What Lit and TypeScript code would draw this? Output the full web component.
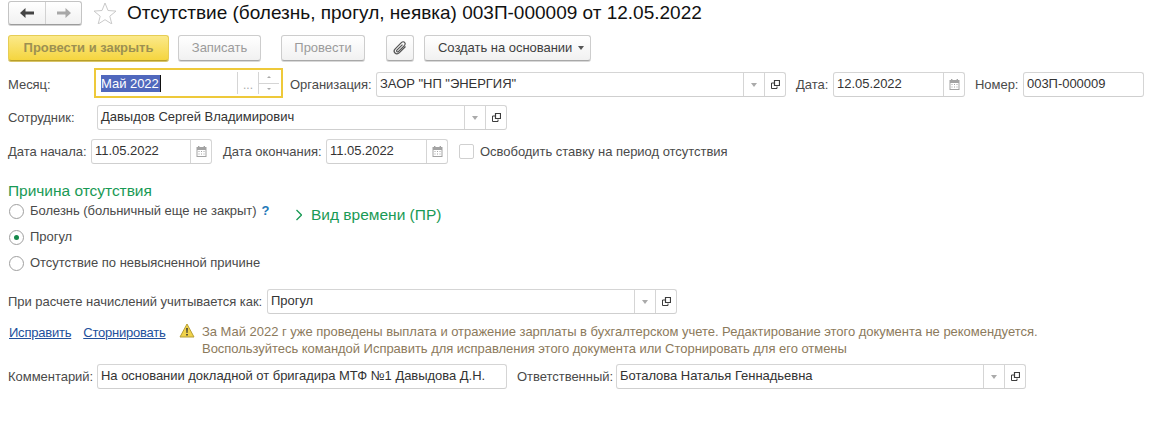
import { LitElement, html, css } from "lit";
import { customElement } from "lit/decorators.js";

const cal = html`<svg class="ico" width="13" height="13" viewBox="0 0 13 13"><path fill="#a3a3a3" d="M1.500 2h10v10h-10z"/><path fill="#fff" d="M2.500 5h8v6h-8z"/><path fill="#a3a3a3" d="M3 1h1.400v2H3zM8.600 1H10v2H8.600zM3.500 6h1v1h-1zM6 6h1v1H6zM8.500 6h1v1h-1zM3.500 8.500h1v1h-1zM6 8.500h1v1H6zM8.500 8.500h1v1h-1z"/></svg>`;
const open = html`<svg class="ico" width="9" height="9" viewBox="0 0 9 9" fill="none" stroke="#3c3c3c" stroke-width="1"><path d="M3.500 .5h5v5h-5z" stroke-width="1.200"/><path d="M3 3H.5v5.500h5.500V6.500"/></svg>`;
const caret = html`<span class="caret"></span>`;

@customElement("app-root")
export class AppRoot extends LitElement {
  static styles = css`
    :host { display: block; width: 1153px; height: 421px; background: #fff; overflow: hidden;
      font: 13px/16px "Liberation Sans", Arial, sans-serif; color: #4a4a4a; letter-spacing: -.03px; }
    * { box-sizing: border-box; }
    .head { display: flex; align-items: center; height: 24px; margin: 1px 0 0 8px; }
    .nav { display: flex; width: 74px; height: 24px; border: 1px solid #c4c4c4; border-bottom-color: #9c9c9c; border-radius: 3px;
      background: linear-gradient(#fff, #f1f1f1); box-shadow: 0 1px 0 #d0d0d0; }
    .nav > div { display: flex; align-items: center; justify-content: center; }
    .nav > div:first-child { width: 37px; border-right: 1px solid #d2d2d2; }
    .nav > div:last-child { flex: 1; }
    .star { margin-left: 11px; }
    h1 { margin: 0 0 0 10px; font: 400 19px/24px "Liberation Sans", Arial, sans-serif; color: #111; letter-spacing: 0; white-space: nowrap; }
    .bar { display: flex; margin: 10px 0 0 8px; height: 26px; }
    .btn { display: flex; align-items: center; justify-content: center; height: 26px; border: 1px solid #cdcdcd; border-bottom-color: #a8a8a8;
      border-radius: 3px; background: linear-gradient(#fff, #f1f1f1); color: #9b9b9b; box-shadow: 0 1px 0 #d8d8d8; }
    .primary { width: 161px; background: linear-gradient(#fbe98a, #f5d53f); border-color: #e6cd55 #e6cd55 #b89f2a; color: #9c9052; font-weight: 700; box-shadow: 0 1px 0 #d8c468; }
    .b-save { width: 83px; margin-left: 9px; }
    .b-post { width: 84px; margin-left: 20px; }
    .b-clip { width: 28px; margin-left: 21px; color: #444; }
    .b-base { width: 167px; margin-left: 10px; color: #3e3e3e; justify-content: flex-start; padding-left: 13px; }
    .b-base .caret { margin-left: 6px; border-top-color: #555; }
    .row { display: flex; align-items: center; height: 25px; padding-left: 8px; white-space: nowrap; }
    .r1 { margin-top: 11px; } .r2 { margin-top: 8px; } .r3 { margin-top: 9px; }
    .lbl { flex: none; }
    .f { display: flex; flex: none; height: 25px; border: 1px solid #d5d5d5; border-bottom-color: #cfcfcf; border-radius: 3px; color: #333; background: #fff; }
    .f .t { flex: 1; padding-left: 3px; line-height: 22px; overflow: hidden; }
    .f .c { display: flex; flex: none; width: 21px; align-items: center; justify-content: center; border-left: 1px solid #d5d5d5; }
    .caret { display: block; width: 0; height: 0; border: 3px solid transparent; border-top: 4px solid #aaa; border-bottom: 0; }
    .ico { display: block; }
    .focus { align-self: flex-start; width: 189px; height: 30px; margin-top: -4px; border: 2px solid #eec93a; border-radius: 0; }
    .focus .t { padding-left: 5px; display: flex; align-items: center; }
    .sel { background: #5068bd; color: #fff; height: 17px; line-height: 17px; padding-right: 1px; border-right: 1px solid #111; }
    .focus .c { margin: 2px 0; }
    .focus .dots { color: #aaa; font-size: 12px; line-height: 12px; align-items: flex-end; padding-bottom: 3px; }
    .focus .spin { width: 23px; flex-direction: column; justify-content: flex-start; padding-right: 2px; }
    .spin b { display: flex; flex: 1; width: 100%; align-items: center; justify-content: center; }
    .spin b:first-child { border-bottom: 1px solid #d5d5d5; }
    .spin i { display: block; border: 2px solid transparent; }
    .spin b:first-child i { border-bottom: 2px solid #aaa; border-top: 0; }
    .spin b:last-child i { border-top: 2px solid #aaa; border-bottom: 0; }
    .w86 { width: 86px; } .w89 { width: 89px; }
    .l-org { width: 86px; margin-left: 7px; }
    .f-org { width: 410px; } .f-410 { width: 410px; }
    .l-date { width: 37px; margin-left: 10px; }
    .f-date { width: 132px; }
    .l-num { width: 48px; margin-left: 10px; }
    .f-num { width: 121px; }
    .f-d1 { width: 121px; }
    .w83 { width: 83px; }
    .l-end { width: 103px; margin-left: 11px; }
    .f-d2 { width: 122px; }
    .chk { width: 15px; height: 15px; margin: 0 6px 0 11px; border: 1px solid #d0d0d0; border-radius: 2px; }
    .sect { margin: 19px 0 0 8px; font-size: 15.500px; line-height: 16px; color: #199a55; }
    .reason { display: flex; margin: -1px 0 0 9px; }
    .radios { width: 287px; }
    .radio { display: flex; align-items: center; height: 26px; }
    .dot { flex: none; width: 15px; height: 15px; border: 1px solid #9f9f9f; border-radius: 50%; margin-right: 6px; display: flex; align-items: center; justify-content: center; }
    .dot.on::after { content: ""; width: 5px; height: 5px; border-radius: 50%; background: #15894b; }
    .q { margin-left: 5px; color: #2378b8; font-weight: 700; }
    .kind { display: flex; align-items: center; height: 26px; margin-top: 4px; font-size: 15.500px; letter-spacing: 0; color: #199a55; }
    .kind svg { margin-right: 9px; }
    .calc { margin-top: 13px; }
    .l-calc { width: 259px; }
    .msgrow { display: flex; margin: 9px 0 0 9px; }
    .links { display: flex; width: 170px; height: 18px; align-items: center; margin-top: 1px; }
    a { color: #22509c; text-decoration: underline; letter-spacing: -.22px; }
    a + a { margin-left: 12px; }
    .warn { flex: none; margin: 0 7px 0 0; }
    .msg { color: #8c7a5c; line-height: 17px; white-space: nowrap; }
    .cmt { margin-top: 7px; }
    .l-cmt { width: 89px; }
    .l-resp { width: 99px; margin-left: 10px; }
  `;

  field(cls: string, text: string, kind: "ref" | "date" | "plain") {
    return html`<div class="f ${cls}"><div class="t">${text}</div>
      ${kind === "ref" ? html`<div class="c">${caret}</div><div class="c">${open}</div>` : ""}
      ${kind === "date" ? html`<div class="c">${cal}</div>` : ""}</div>`;
  }

  radio(on: boolean, text: string, extra: unknown = "") {
    return html`<div class="radio"><span class="dot ${on ? "on" : ""}"></span>${text}${extra}</div>`;
  }

  render() {
    return html`
      <div class="head">
        <div class="nav">
          <div><svg width="16" height="12" viewBox="0 0 16 12"><path fill="#444" d="M1 6l5.500-5v3.500H15v3H6.500V11z"/></svg></div>
          <div><svg width="16" height="12" viewBox="0 0 16 12"><path fill="#a8a8a8" d="M15 6L9.500 1v3.500H1v3h8.500V11z"/></svg></div>
        </div>
        <svg class="star" width="24" height="22" viewBox="0 0 24 22"><path fill="#fff" stroke="#c9c9c9" d="M12 1l3 7.500 8 .6-6.200 5.100 2 7.800L12 17.700 5.200 22l2-7.800L1 9.100l8-.6z"/></svg>
        <h1>Отсутствие (болезнь, прогул, неявка) 003П-000009 от 12.05.2022</h1>
      </div>
      <div class="bar">
        <div class="btn primary">Провести и закрыть</div>
        <div class="btn b-save">Записать</div>
        <div class="btn b-post">Провести</div>
        <div class="btn b-clip"><svg width="16" height="16" viewBox="0 0 16 16" fill="none" stroke="#555" stroke-width="1.200"><path d="M13.500 6.500l-6.300 6.300c-1.300 1.300-3.100 1.300-4.200.2s-1.100-2.900.2-4.200L9.600 2.400c.9-.9 2.200-.9 3 0s.8 2 0 2.900L6.300 11.600c-.4.400-1 .4-1.400 0s-.4-1 0-1.400L10.500 4.600"/></svg></div>
        <div class="btn b-base">Создать на основании${caret}</div>
      </div>
      <div class="row r1">
        <div class="lbl w86">Месяц:</div>
        <div class="f focus"><div class="t"><span class="sel">Май 2022</span></div><div class="c dots">...</div><div class="c spin"><b><i></i></b><b><i></i></b></div></div>
        <div class="lbl l-org">Организация:</div>
        ${this.field("f-org", 'ЗАОР "НП "ЭНЕРГИЯ"', "ref")}
        <div class="lbl l-date">Дата:</div>
        ${this.field("f-date", "12.05.2022", "date")}
        <div class="lbl l-num">Номер:</div>
        ${this.field("f-num", "003П-000009", "plain")}
      </div>
      <div class="row r2">
        <div class="lbl w89">Сотрудник:</div>
        ${this.field("f-410", "Давыдов Сергей Владимирович", "ref")}
      </div>
      <div class="row r3">
        <div class="lbl w83">Дата начала:</div>
        ${this.field("f-d1", "11.05.2022", "date")}
        <div class="lbl l-end">Дата окончания:</div>
        ${this.field("f-d2", "11.05.2022", "date")}
        <div class="chk"></div>
        <div>Освободить ставку на период отсутствия</div>
      </div>
      <div class="sect">Причина отсутствия</div>
      <div class="reason">
        <div class="radios">
          ${this.radio(false, "Болезнь (больничный еще не закрыт)", html`<span class="q">?</span>`)}
          ${this.radio(true, "Прогул")}
          ${this.radio(false, "Отсутствие по невыясненной причине")}
        </div>
        <div class="kind"><svg width="6" height="12" viewBox="0 0 6 12" fill="none" stroke="#199a55" stroke-width="1.300"><path d="M.5 1l5 5-5 5"/></svg>Вид времени (ПР)</div>
      </div>
      <div class="row calc">
        <div class="lbl l-calc">При расчете начислений учитывается как:</div>
        ${this.field("f-410", "Прогул", "ref")}
      </div>
      <div class="msgrow">
        <div class="links"><a>Исправить</a><a>Сторнировать</a></div>
        <svg class="warn" width="16" height="15" viewBox="0 0 16 15"><path fill="#f0d24a" stroke="#b79f35" stroke-linejoin="round" d="M8 1l7 13H1z"/><path fill="#333" d="M7.200 5h1.600l-.3 5h-1zM7.200 11h1.600v1.500H7.200z"/></svg>
        <div class="msg">За Май 2022 г уже проведены выплата и отражение зарплаты в бухгалтерском учете. Редактирование этого документа не рекомендуется.<br>Воспользуйтесь командой Исправить для исправления этого документа или Сторнировать для его отмены</div>
      </div>
      <div class="row cmt">
        <div class="lbl l-cmt">Комментарий:</div>
        ${this.field("f-410", "На основании докладной от бригадира МТФ №1 Давыдова Д.Н.", "plain")}
        <div class="lbl l-resp">Ответственный:</div>
        ${this.field("f-410", "Боталова Наталья Геннадьевна", "ref")}
      </div>
    `;
  }
}
